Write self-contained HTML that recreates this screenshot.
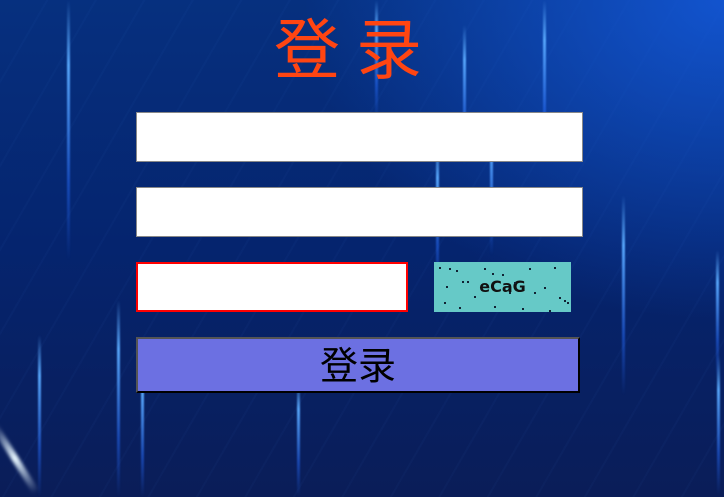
<!DOCTYPE html>
<html><head><meta charset="utf-8"><style>
html,body{margin:0;padding:0;width:724px;height:497px;overflow:hidden}
body{position:relative;font-family:"Liberation Sans","Noto Sans CJK SC",sans-serif;
background:
radial-gradient(ellipse 420px 320px at 100% 0%,rgba(20,90,220,.85),rgba(20,90,220,0)),
repeating-linear-gradient(120deg,rgba(80,150,255,0) 0 40px,rgba(80,150,255,.03) 40px 42px),
linear-gradient(to bottom,#06307f 0%,#05246e 50%,#0a1d58 100%);}
.l{position:absolute;width:3px;background:linear-gradient(to bottom,rgba(40,120,255,0),rgba(90,170,255,.95) 25%,rgba(40,110,255,.5) 70%,rgba(40,110,255,0));filter:blur(.8px)}
.a{position:absolute;box-sizing:border-box}
.t{position:absolute;top:12px;font-size:66px;line-height:76px;color:#ff4512}
.d{position:absolute;width:1.5px;height:1.5px;background:#123}
</style></head><body>
<div class="l" style="left:67px;top:0;height:260px"></div>
<div class="l" style="left:38px;top:335px;height:162px"></div>
<div class="l" style="left:117px;top:300px;height:197px"></div>
<div class="l" style="left:141px;top:360px;height:137px"></div>
<div class="l" style="left:297px;top:380px;height:117px"></div>
<div class="l" style="left:375px;top:0;height:120px"></div>
<div class="l" style="left:436px;top:140px;height:150px"></div>
<div class="l" style="left:463px;top:25px;height:140px"></div>
<div class="l" style="left:490px;top:115px;height:140px"></div>
<div class="l" style="left:543px;top:0;height:160px"></div>
<div class="l" style="left:622px;top:195px;height:200px"></div>
<div class="l" style="left:717px;top:355px;height:140px"></div>
<div class="l" style="left:716px;top:250px;height:130px"></div>
<div class="a" style="left:-25px;top:455px;width:80px;height:7px;background:linear-gradient(to right,rgba(150,220,255,0),#e6f6ff,rgba(150,220,255,0));transform:rotate(58deg);filter:blur(1.5px)"></div>
<div class="t" style="left:274px">登</div>
<div class="t" style="left:356px">录</div>
<div class="a" style="left:136px;top:112px;width:447px;height:50px;background:#fff;border:1px solid #888"></div>
<div class="a" style="left:136px;top:187px;width:447px;height:50px;background:#fff;border:1px solid #888"></div>
<div class="a" style="left:136px;top:262px;width:272px;height:50px;background:#fff;border:2px solid #f00"></div>
<div class="a" style="left:434px;top:262px;width:137px;height:50px;background:#66c9c7;text-align:center;line-height:50px;font-size:16px;font-weight:bold;color:#111;font-family:'DejaVu Sans',sans-serif">eCaG
<span class="d" style="left:5px;top:5px"></span><span class="d" style="left:15px;top:6px"></span><span class="d" style="left:22px;top:8px"></span><span class="d" style="left:28px;top:19px"></span><span class="d" style="left:33px;top:19px"></span><span class="d" style="left:50px;top:6px"></span><span class="d" style="left:58px;top:11px"></span><span class="d" style="left:68px;top:12px"></span><span class="d" style="left:80px;top:20px"></span><span class="d" style="left:95px;top:6px"></span><span class="d" style="left:120px;top:5px"></span><span class="d" style="left:125px;top:35px"></span><span class="d" style="left:130px;top:38px"></span><span class="d" style="left:133px;top:40px"></span><span class="d" style="left:10px;top:40px"></span><span class="d" style="left:25px;top:45px"></span><span class="d" style="left:40px;top:34px"></span><span class="d" style="left:60px;top:44px"></span><span class="d" style="left:88px;top:46px"></span><span class="d" style="left:100px;top:30px"></span><span class="d" style="left:110px;top:25px"></span><span class="d" style="left:115px;top:48px"></span><span class="d" style="left:12px;top:24px"></span><span class="d" style="left:75px;top:30px"></span>
</div>
<div class="a" style="left:136px;top:337px;width:444px;height:56px;background:#6c70e2;border:2px solid;border-color:#555 #000 #000 #555;text-align:center;line-height:56px;font-size:38px;color:#000">登录</div>
</body></html>
